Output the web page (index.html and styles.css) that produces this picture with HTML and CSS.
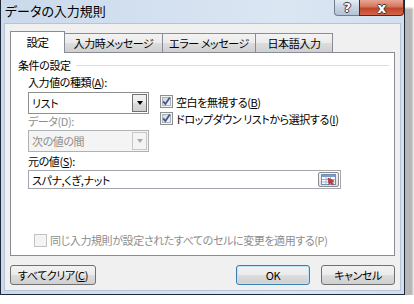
FILE: index.html
```html
<!DOCTYPE html>
<html lang="ja">
<head>
    <meta charset="UTF-8">
    <title>データの入力規則</title>
    <link rel="stylesheet" href="styles.css">
</head>
<body>
    <div class="window">
        <div class="titlebar">
            <span class="title">データの入力規則</span>
            <div class="caption-buttons">
                <span class="cap-btn help">?</span>
                <span class="cap-btn close">x</span>
            </div>
        </div>
        <div class="client">
            <div class="tabs">
                <div class="tab selected">設定</div>
                <div class="tab t2">入力時メッセージ</div>
                <div class="tab t3">エラー メッセージ</div>
                <div class="tab t4">日本語入力</div>
            </div>
            <div class="panel">
                <div class="group-head">
                    <span>条件の設定</span>
                    <span class="group-line"></span>
                </div>
                <div class="group-body">
                    <div class="top-row">
                        <div class="left-col">
                            <div class="label">入力値の種類(<u>A</u>):</div>
                            <div class="combo">
                                <span class="combo-text">リスト</span>
                                <span class="combo-btn"><span class="arrow"></span></span>
                            </div>
                            <div class="label disabled">データ(D):</div>
                            <div class="combo off">
                                <span class="combo-text">次の値の間</span>
                                <span class="combo-btn"><span class="arrow"></span></span>
                            </div>
                        </div>
                        <div class="right-col">
                            <div class="check-row">
                                <svg class="check" width="13" height="13" viewBox="0 0 13 13">
                                    <defs>
                                        <linearGradient id="cb" x1="0" y1="0" x2="1" y2="1">
                                            <stop offset="0" stop-color="#d4d4d4"/>
                                            <stop offset="1" stop-color="#f7f7f7"/>
                                        </linearGradient>
                                    </defs>
                                    <rect x="0.5" y="0.5" width="12" height="12" fill="#f4f4f4" stroke="#8e8f8f"/>
                                    <rect x="2.5" y="2.5" width="8" height="8" fill="url(#cb)" stroke="#aeb3b9"/>
                                    <path d="M3.2 6.4 L5.4 9 L9.8 2.6" fill="none" stroke="#3d5a9e" stroke-width="1.8"/>
                                </svg>
                                <span>空白を無視する(<u>B</u>)</span>
                            </div>
                            <div class="check-row">
                                <svg class="check" width="13" height="13" viewBox="0 0 13 13">
                                    <rect x="0.5" y="0.5" width="12" height="12" fill="#f4f4f4" stroke="#8e8f8f"/>
                                    <rect x="2.5" y="2.5" width="8" height="8" fill="url(#cb)" stroke="#aeb3b9"/>
                                    <path d="M3.2 6.4 L5.4 9 L9.8 2.6" fill="none" stroke="#3d5a9e" stroke-width="1.8"/>
                                </svg>
                                <span>ドロップダウン リストから選択する(<u>I</u>)</span>
                            </div>
                        </div>
                    </div>
                    <div class="label">元の値(<u>S</u>):</div>
                    <div class="source">
                        <span>スパナ,くぎ,ナット</span>
                        <span class="ref-btn">
                            <svg width="15" height="11" viewBox="0 0 15 11">
                                <rect x="0.5" y="0.5" width="14" height="10" fill="#fff" stroke="#6f8fb8"/>
                                <rect x="1" y="1" width="13" height="2" fill="#7e9ccc"/>
                                <path d="M1 5.5 H14 M1 8 H14 M5 3 V10.5 M9.5 3 V10.5" stroke="#9fb4d4" stroke-width="1"/>
                                <path d="M7 4 L13 7 L10.5 7.8 L12.5 10 L11.3 10.8 L9.4 8.6 L8 10.4 Z" fill="#d9342b" stroke="#8d1e17" stroke-width="0.6"/>
                            </svg>
                        </span>
                    </div>
                    <div class="apply-row">
                        <span class="check-off"></span>
                        <span>同じ入力規則が設定されたすべてのセルに変更を適用する(P)</span>
                    </div>
                </div>
            </div>
            <div class="buttons">
                <div class="btn clear">すべてクリア(<u>C</u>)</div>
                <div class="spacer"></div>
                <div class="btn default">OK</div>
                <div class="btn">キャンセル</div>
            </div>
        </div>
    </div>
</body>
</html>
```

FILE: styles.css
```css
* {
    box-sizing: border-box;
}
body {
    margin: 0;
    background: #fff;
    font-family: "Noto Sans CJK JP", "Noto Sans", sans-serif;
    font-size: 11px;
    letter-spacing: -0.4px;
    font-feature-settings: "palt";
    color: #000;
    line-height: 14px;
}
u {
    text-decoration: underline;
}
.window {
    width: 405px;
    height: 295px;
    border: 1px solid #1f2937;
    border-top: none;
    background: linear-gradient(90deg, #cad9eb, #dbe6f3 70%, #d2dfee);
    box-shadow: 8px 8px 2px #b6b6b6;
    display: flex;
    flex-direction: column;
}
.titlebar {
    height: 23px;
    display: flex;
    justify-content: space-between;
    align-items: flex-start;
}
.title {
    font-size: 13px;
    letter-spacing: 0;
    line-height: 22px;
    padding-left: 4px;
    color: #000;
}
.caption-buttons {
    display: flex;
}
.cap-btn {
    height: 16px;
    display: flex;
    align-items: center;
    justify-content: center;
    color: #fff;
    font-family: "DejaVu Sans", sans-serif;
    font-weight: bold;
    font-size: 13px;
    text-shadow: 1px 0 #3a3a3a, -1px 0 #3a3a3a, 0 1px #3a3a3a, 0 -1px #3a3a3a;
}
.help {
    width: 25px;
    border: 1px solid #707d8d;
    border-top: none;
    border-right: none;
    border-radius: 0 0 0 4px;
    background: linear-gradient(#e4ecf5, #c6d3e2 50%, #b3c3d6);
}
.close {
    width: 45px;
    border: 1px solid #5b2319;
    border-top: none;
    border-radius: 0 0 4px 0;
    background: linear-gradient(#e8a593, #d4765f 45%, #c24328 55%, #d2674c);
    font-size: 14px;
}
.client {
    flex: 1;
    margin: 0 3px 3px 3px;
    background: #f0f0f0;
    border: 1px solid #b5c4d6;
    padding: 7px 5px 0 5px;
}
.tabs {
    display: flex;
    align-items: flex-end;
    height: 21px;
}
.tab {
    height: 19px;
    border: 1px solid #898c95;
    border-bottom: none;
    background: linear-gradient(#f3f3f3, #ebebeb 50%, #dddddd 51%, #cfcfcf);
    text-align: center;
    line-height: 18px;
}
.tab + .tab {
    border-left: none;
}
.tab.selected {
    height: 22px;
    width: 55px;
    margin-bottom: -1px;
    background: #fff;
    position: relative;
    line-height: 21px;
    border-right: 1px solid #898c95;
    font-size: 11.5px;
}
.t2 {
    width: 98px;
}
.t3 {
    width: 93px;
}
.t4 {
    width: 77px;
}
.panel {
    width: 385px;
    height: 204px;
    border: 1px solid #898c95;
    background: #fff;
    padding: 5px 0 0 7px;
}
.group-head {
    display: flex;
    align-items: center;
    gap: 5px;
    padding-right: 5px;
}
.group-line {
    flex: 1;
    height: 1px;
    background: #d5dfe5;
}
.group-body {
    padding: 3px 0 0 10px;
}
.top-row {
    display: flex;
    gap: 11px;
}
.left-col {
    width: 121px;
}
.label {
    height: 14px;
}
.disabled {
    color: #8d8d8d;
}
.combo {
    height: 22px;
    border: 1px solid #8e8f8f;
    background: #fff;
    display: flex;
    align-items: center;
    justify-content: space-between;
    padding: 1px 1px 1px 3px;
    margin-top: 3px;
}
.combo.off {
    margin-top: 2px;
    border-color: #adb2b5;
    background: #f4f4f4;
    color: #8d8d8d;
}
.combo-btn {
    width: 15px;
    height: 18px;
    border: 1px solid #707070;
    background: linear-gradient(#f2f2f2, #ebebeb 50%, #dddddd 51%, #cfcfcf);
    display: flex;
    align-items: center;
    justify-content: center;
}
.arrow {
    width: 0;
    height: 0;
    border-left: 3.5px solid transparent;
    border-right: 3.5px solid transparent;
    border-top: 4px solid #000;
}
.off .combo-btn {
    border-color: #c7c7c7;
    background: #f4f4f4;
}
.off .arrow {
    border-top-color: #a8a8a8;
}
.right-col {
    padding-top: 18px;
}
.check-row {
    height: 17px;
    display: flex;
    align-items: center;
    gap: 3px;
}
.source {
    width: 313px;
    height: 19px;
    border: 1px solid #a3a6ad;
    background: #fff;
    display: flex;
    align-items: center;
    justify-content: space-between;
    padding: 0 1px 0 3px;
}
.label + .source {
    margin-top: 2px;
}
.top-row + .label {
    margin-top: 2px;
}
.ref-btn {
    width: 21px;
    height: 15px;
    border: 1px solid #8c8c8c;
    border-radius: 2px;
    background: linear-gradient(#f6f6f6, #dedede);
    display: flex;
    align-items: center;
    justify-content: center;
}
.apply-row {
    margin: 44px 0 0 6px;
    display: flex;
    align-items: center;
    gap: 3px;
    color: #8d8d8d;
}
.check-off {
    width: 13px;
    height: 13px;
    border: 1px solid #c3c3c3;
    background: #f4f4f4;
}
.buttons {
    display: flex;
    gap: 11px;
    margin-top: 9px;
}
.spacer {
    flex: 1;
}
.btn {
    width: 74px;
    height: 20px;
    border: 1px solid #707070;
    border-radius: 3px;
    background: linear-gradient(#f2f2f2, #ebebeb 50%, #dddddd 51%, #cfcfcf);
    text-align: center;
    line-height: 18px;
}
.btn.clear {
    width: 86px;
}
.btn.default {
    border-color: #3c7fb1;
    box-shadow: inset 0 0 0 1px #bfe3f7;
}
```
